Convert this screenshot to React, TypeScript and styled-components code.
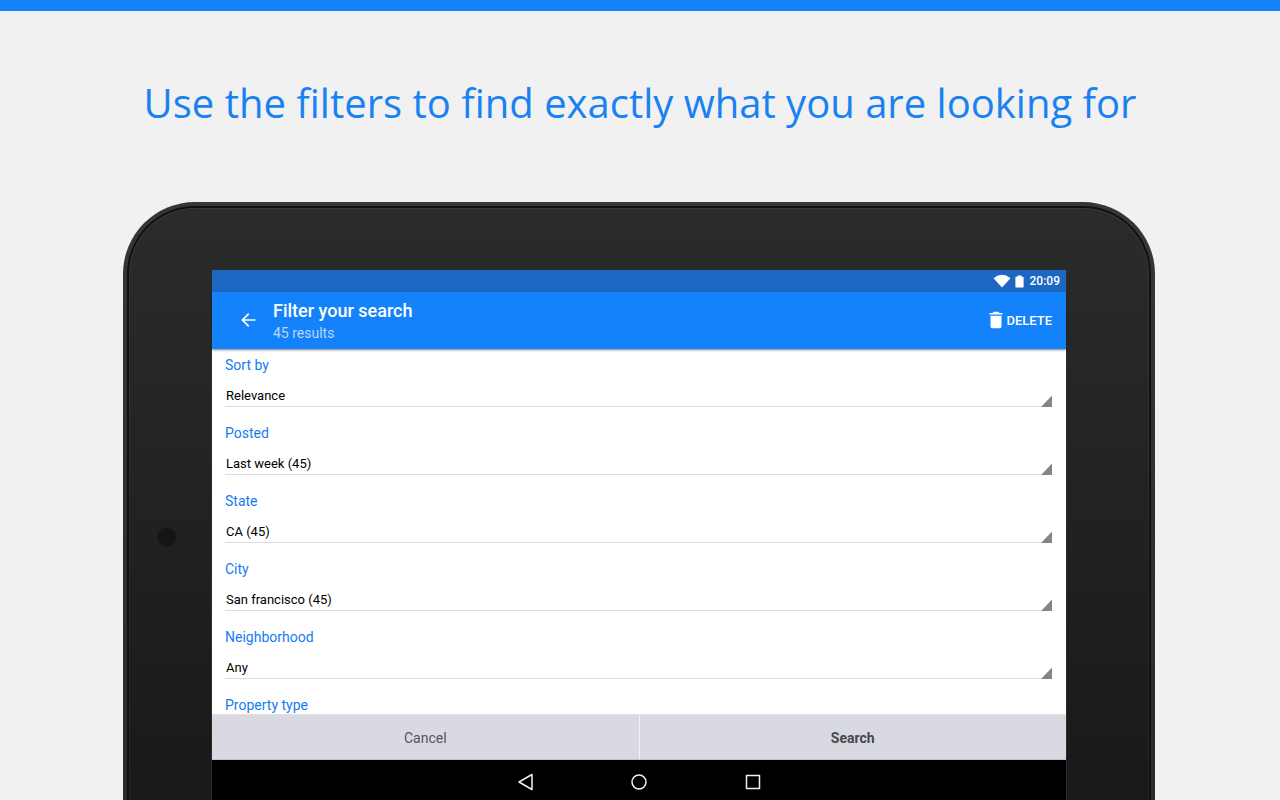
import React from "react";
import styled, { createGlobalStyle } from "styled-components";

const GlobalStyle = createGlobalStyle`
  *, *::before, *::after { box-sizing: border-box; }
  body { margin: 0; background: #f1f1f1; font-family: Roboto, sans-serif; }
  button, select { font: inherit; color: inherit; }
`;

const Page = styled.div`
  height: 100vh;
  overflow: hidden;
  display: flex;
  flex-direction: column;
  border-top: 11px solid #1482fa;
`;

const Headline = styled.h1`
  margin: 64px 0 71px;
  color: #1a82f0;
  font: 400 40px/56px "Open Sans", sans-serif;
  text-align: center;
`;

const Rim = styled.main`
  flex: 1;
  min-height: 0;
  display: flex;
  margin: 0 125px 0 123px;
  padding: 4px 4px 0;
  border-radius: 72px 72px 0 0;
  background: linear-gradient(#363636, #2b2b2b);
`;

const Groove = styled.div`
  flex: 1;
  display: flex;
  padding: 2px 2px 0;
  border-radius: 68px 68px 0 0;
  background: #101010;
`;

const Highlight = styled.div`
  flex: 1;
  display: flex;
  padding: 1px 1px 0;
  border-radius: 66px 66px 0 0;
  background: linear-gradient(#383838, #222222);
`;

const Bezel = styled.div`
  flex: 1;
  display: grid;
  grid-template-columns: 82px minmax(0, 1fr) 82px;
  grid-template-rows: minmax(0, 1fr);
  padding-top: 61px;
  border-radius: 65px 65px 0 0;
  background: linear-gradient(#2b2b2b, #191919);
`;

const CameraSide = styled.div`
  padding: 257px 0 0 27px;
`;

const Camera = styled.div`
  width: 20px;
  height: 20px;
  border: 1px solid #1b1b1b;
  border-radius: 50%;
  background: #151515;
`;

const Screen = styled.section`
  display: flex;
  flex-direction: column;
  min-height: 0;
  background: #ffffff;
  box-shadow: 0 0 0 1px #2b2b2b;
`;

const StatusBar = styled.div`
  flex: none;
  height: 22px;
  display: flex;
  align-items: center;
  justify-content: flex-end;
  padding-right: 6px;
  background: #1b67c2;
  color: #ffffff;
  font-size: 12px;
  font-weight: 500;
`;

const WifiIcon = styled.svg`
  width: 18px;
  height: 14px;
  margin-right: 4px;
`;

const BatteryIcon = styled.svg`
  width: 9px;
  height: 13px;
  margin-right: 6px;
`;

const AppBar = styled.header`
  flex: none;
  height: 57px;
  display: flex;
  align-items: center;
  padding: 0 14px 0 28px;
  background: #1482fa;
  color: #ffffff;
  box-shadow: 0 1px 2px rgba(0, 0, 0, 0.5);
  z-index: 1;
`;

const BarButton = styled.button`
  display: flex;
  align-items: center;
  gap: 3px;
  padding: 0 0 1px;
  border: 0;
  background: none;
  font-size: 13px;
  font-weight: 500;
`;

const TitleBlock = styled.div`
  flex: 1;
  margin-left: 16px;
`;

const Title = styled.h2`
  margin: 0;
  padding-top: 2px;
  font-size: 18px;
  font-weight: 500;
  line-height: 22px;
`;

const Subtitle = styled.p`
  margin: 0;
  padding-top: 1px;
  color: #b5d8fd;
  font-size: 14px;
  line-height: 20px;
`;

const Filters = styled.form`
  flex: 1;
  min-height: 0;
  overflow: hidden;
  padding: 6px 14px 0 13px;
`;

const Field = styled.div`
  height: 68px;
`;

const Label = styled.label`
  display: block;
  color: #147cf0;
  font-size: 14px;
  line-height: 20px;
`;

const SelectLine = styled.div`
  display: flex;
  align-items: flex-end;
  margin-top: 8px;
  height: 24px;
  border-bottom: 1px solid #dcdcdc;
`;

const Select = styled.select`
  flex: 1;
  height: 23px;
  margin: 0;
  padding: 2px 0 0 1px;
  border: 0;
  appearance: none;
  background: none;
  color: #000000;
  font-size: 13px;
`;

const Corner = styled.svg`
  flex: none;
  width: 11px;
  height: 12px;
  margin-bottom: -1px;
`;

const Actions = styled.div`
  flex: none;
  height: 46px;
  display: flex;
  border-top: 1px solid #e2e2e6;
  border-bottom: 1px solid #c4c4c8;
  background: #d9d9e1;
`;

const Action = styled.button<{ $primary?: boolean }>`
  flex: 1;
  padding: 2px 0 0;
  border: 0;
  border-left: ${(p) => (p.$primary ? "1px solid #f3f3f6" : "0")};
  background: none;
  color: ${(p) => (p.$primary ? "#48484a" : "#565658")};
  font-size: 14px;
  font-weight: ${(p) => (p.$primary ? 700 : 400)};
`;

const NavBar = styled.nav`
  flex: none;
  height: 40px;
  display: flex;
  align-items: center;
  justify-content: center;
  gap: 92px;
  padding-top: 4px;
  background: #000000;
`;

const NavButton = styled.button`
  display: flex;
  padding: 0;
  border: 0;
  background: none;
`;

const filters = [
  { id: "sort", label: "Sort by", value: "Relevance" },
  { id: "posted", label: "Posted", value: "Last week (45)" },
  { id: "state", label: "State", value: "CA (45)" },
  { id: "city", label: "City", value: "San francisco (45)" },
  { id: "neighborhood", label: "Neighborhood", value: "Any" },
  { id: "property", label: "Property type", value: "Any" },
];

const navIcons = [
  { name: "Back", shape: <path d="M18 3.500v15L5 11z" /> },
  { name: "Home", shape: <circle cx="11" cy="11" r="7" /> },
  { name: "Overview", shape: <rect x="4.500" y="4.500" width="13" height="13" /> },
];

export default function App() {
  return (
    <>
      <GlobalStyle />
      <Page>
        <Headline>Use the filters to find exactly what you are looking for</Headline>
        <Rim>
          <Groove>
            <Highlight>
              <Bezel>
                <CameraSide>
                  <Camera />
                </CameraSide>
                <Screen>
                  <StatusBar>
                    <WifiIcon viewBox="0 0 18 14" aria-hidden="true">
                      <path d="M0.500 4.200Q9-2.600 17.500 4.200L9 13.600z" fill="#fff" />
                    </WifiIcon>
                    <BatteryIcon viewBox="0 0 9 13" aria-hidden="true">
                      <path d="M2.500 0.500h4v1.200H8q.6 0 .6.6v9.600q0 .6-.6.6H1q-.6 0-.6-.6V2.300q0-.6.6-.6h1.500z" fill="#fff" />
                    </BatteryIcon>
                    <span>20:09</span>
                  </StatusBar>
                  <AppBar>
                    <BarButton aria-label="Back">
                      <svg width="17" height="16" viewBox="0 0 17 16" fill="none" stroke="#fff" strokeWidth="1.700">
                        <path d="M15.500 8H3M8.800 1.700L2.500 8l6.300 6.300" />
                      </svg>
                    </BarButton>
                    <TitleBlock>
                      <Title>Filter your search</Title>
                      <Subtitle>45 results</Subtitle>
                    </TitleBlock>
                    <BarButton>
                      <svg width="14" height="18" viewBox="0 0 14 18" fill="#fff" aria-hidden="true">
                        <path d="M.5 1.900h3.200L4.700.8h4.600l1 1.100h3.200v1.700H.5zM1.500 4.700h11v10.800q0 1.700-1.700 1.700H3.200q-1.700 0-1.700-1.700z" />
                      </svg>
                      DELETE
                    </BarButton>
                  </AppBar>
                  <Filters>
                    {filters.map((f) => (
                      <Field key={f.id}>
                        <Label htmlFor={f.id}>{f.label}</Label>
                        <SelectLine>
                          <Select id={f.id} defaultValue={f.value}>
                            <option>{f.value}</option>
                          </Select>
                          <Corner viewBox="0 0 11 12" aria-hidden="true">
                            <path d="M11 0.500V12H0z" fill="#858585" />
                          </Corner>
                        </SelectLine>
                      </Field>
                    ))}
                  </Filters>
                  <Actions>
                    <Action>Cancel</Action>
                    <Action $primary>Search</Action>
                  </Actions>
                  <NavBar>
                    {navIcons.map((n) => (
                      <NavButton key={n.name} aria-label={n.name}>
                        <svg width="22" height="22" viewBox="0 0 22 22" fill="none" stroke="#f2f2f2" strokeWidth="1.500" strokeLinejoin="round">
                          {n.shape}
                        </svg>
                      </NavButton>
                    ))}
                  </NavBar>
                </Screen>
              </Bezel>
            </Highlight>
          </Groove>
        </Rim>
      </Page>
    </>
  );
}
